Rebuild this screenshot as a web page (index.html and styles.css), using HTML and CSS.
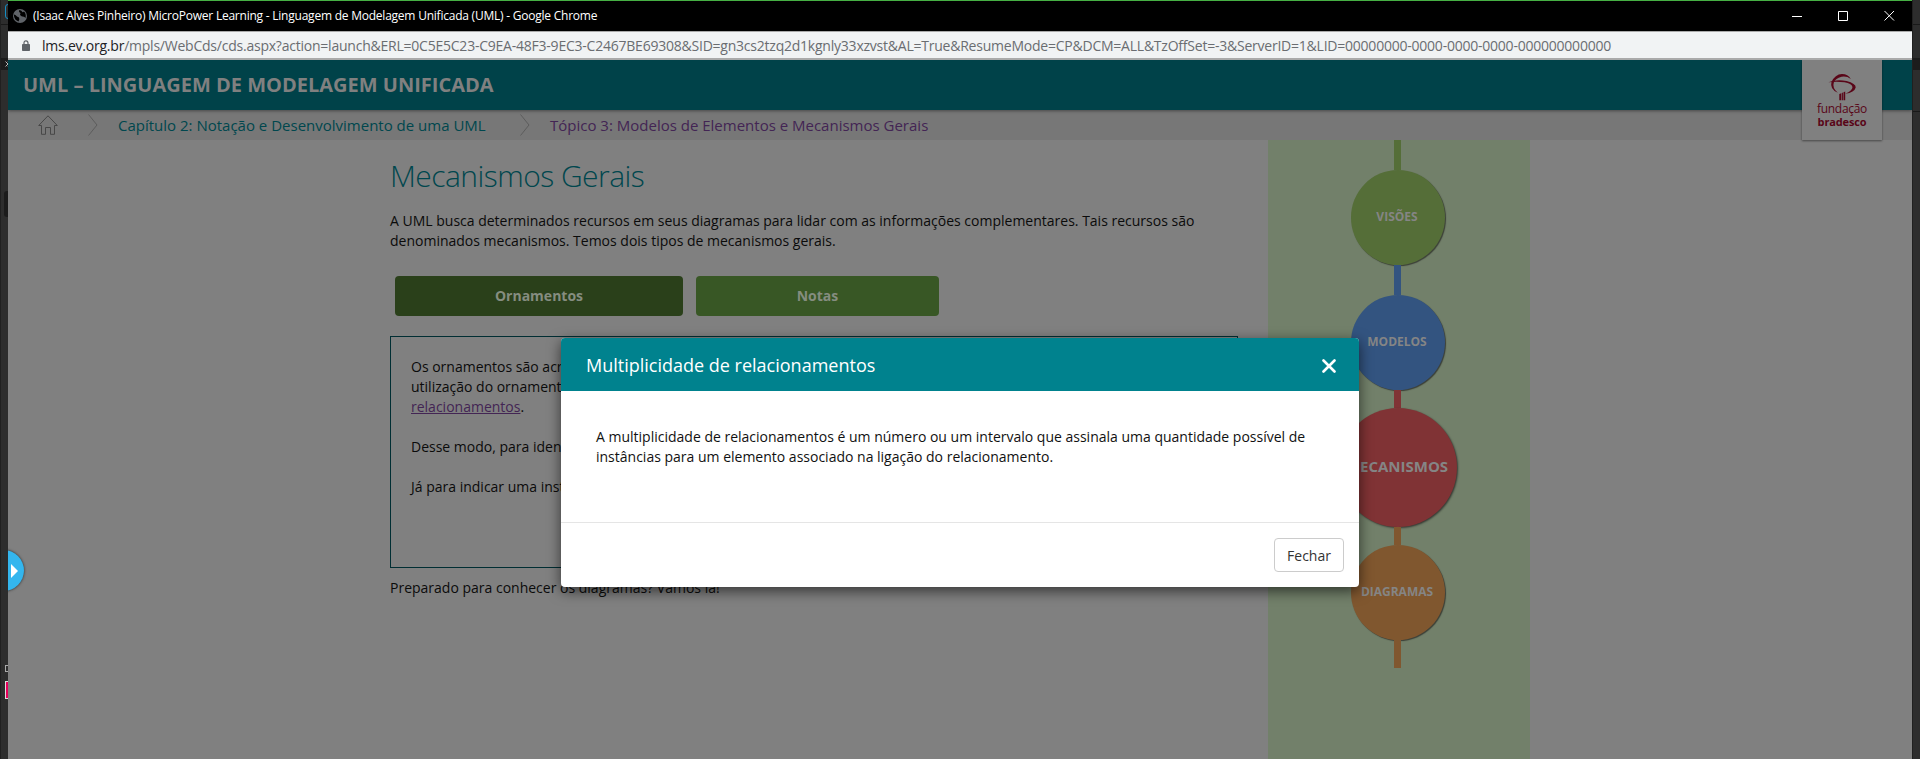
FILE: index.html
```html
<!DOCTYPE html>
<html lang="pt-BR">
<head>
<meta charset="utf-8">
<title>MicroPower Learning - UML</title>
<link rel="stylesheet" href="styles.css">
</head>
<body>
<div class="desktop">
  <div class="edge edge-left">
    <i class="tab"></i><i class="line l1"></i><i class="band"></i><svg class="chev" viewBox="0 0 4 6"><path d="M.5 .5L3 3L.5 5.500M3 .5L5.500 3L3 5.500" fill="none" stroke="#bbb"/></svg><i class="slot"></i><i class="mini"></i><i class="swatch"></i>
  </div>
  <div class="window">
    <header class="titlebar">
      <svg class="globe" viewBox="0 0 14 14"><circle cx="7" cy="7" r="7" fill="#5f6368"/><path d="M1 5.500Q3 6 4 7.500L6 8.500Q7 10 5.500 12.500Q1.500 11 1 7ZM6 1.300Q5.500 3.500 7.500 4L7 6L9 7.500Q11.500 7 12.500 9Q13.500 5 11 2.500Q9.500 4 9 2.500Q8 1 6 1.300Z" fill="#000"/></svg>
      <span class="title">(Isaac Alves Pinheiro) MicroPower Learning - Linguagem de Modelagem Unificada (UML) - Google Chrome</span>
      <svg class="controls" viewBox="0 0 104 12"><path d="M0 6.500H10M46.500 1.500H55.500V10.500H46.500ZM92.500 1L102 10.500M102 1L92.500 10.500" fill="none" stroke="#fff"/></svg>
    </header>
    <div class="urlbar">
      <svg class="lock" viewBox="0 0 8 11"><path d="M2 5V3Q2 .8 4 .8T6 3V5" fill="none" stroke="#5f6368" stroke-width="1.200"/><rect y="4" width="8" height="7" rx=".8" fill="#5f6368"/></svg>
      <span class="url"><b>lms.ev.org.br</b>/mpls/WebCds/cds.aspx?action=launch&amp;ERL=0C5E5C23-C9EA-48F3-9EC3-C2467BE69308&amp;SID=gn3cs2tzq2d1kgnly33xzvst&amp;AL=True&amp;ResumeMode=CP&amp;DCM=ALL&amp;TzOffSet=-3&amp;ServerID=1&amp;LID=00000000-0000-0000-0000-000000000000</span>
    </div>
    <div class="page">
      <div class="course"><span class="course-name">UML – LINGUAGEM DE MODELAGEM UNIFICADA</span></div>
      <nav class="crumbs">
        <svg class="home" viewBox="0 0 20 20"><path d="M.7 10.500L10 .8L19.300 10.500H16.500V19.300H12.500V12.500H7.500V19.300H3.500V10.500Z" fill="none" stroke="#484848"/></svg>
        <svg class="sep" viewBox="0 0 10 22"><path d="M.5 .5L9 11L.5 21.500" fill="none" stroke="#555" stroke-width=".8"/></svg>
        <span class="crumb chapter">Capítulo 2: Notação e Desenvolvimento de uma UML</span>
        <svg class="sep sep2" viewBox="0 0 10 22"><path d="M.5 .5L9 11L.5 21.500" fill="none" stroke="#555" stroke-width=".8"/></svg>
        <span class="crumb topic">Tópico 3: Modelos de Elementos e Mecanismos Gerais</span>
      </nav>
      <div class="brand">
        <svg class="tree" viewBox="0 0 28 28"><g fill="#590618"><path d="M3.500 8Q7 .3 14 0Q20 0 22.800 5Q18.500 1.800 13.500 2.800Q7.500 4.500 5.800 8.500Q4 14 9.800 18.800Q1.500 15 3.500 8Z"/><path d="M.3 8.300Q9 4.800 18.500 7Q28 9.500 27.700 13.500Q26.500 18.500 17.200 19.800Q24.500 16.500 24.500 13Q23.500 9.500 16.500 8.300Q8.500 7.300 .3 8.300Z"/><path d="M11.300 20L13.300 19.300V26.300H11.300ZM13.900 19L14.900 18.600V26.300H13.900ZM15.500 18.300L17.200 17.600V26.300H15.500Z"/></g></svg>
        <span class="brand-a">fundação</span><span class="brand-b">bradesco</span>
      </div>
      <div class="columns">
        <main class="lesson">
          <h1>Mecanismos Gerais</h1>
          <p class="intro">A UML busca determinados recursos em seus diagramas para lidar com as informações complementares. Tais recursos são<br>denominados mecanismos. Temos dois tipos de mecanismos gerais.</p>
          <div class="tabs"><span class="pill active">Ornamentos</span><span class="pill notes">Notas</span></div>
          <div class="panel">
            <p>Os ornamentos são acr<br>utilização do ornament<br><a>relacionamentos</a>.</p>
            <p>Desse modo, para iden</p>
            <p>Já para indicar uma inst</p>
          </div>
          <p class="outro">Preparado para conhecer os diagramas? Vamos lá!</p>
        </main>
        <aside class="rail">
          <i class="stem green s1"></i><div class="node green">VISÕES</div>
          <i class="stem blue s2"></i><div class="node blue">MODELOS</div>
          <i class="stem red s3"></i><div class="node red big">MECANISMOS</div>
          <i class="stem orange s4"></i><div class="node orange">DIAGRAMAS</div>
          <i class="stem orange s5"></i>
        </aside>
      </div>
      <div class="drawer"><i></i></div>
      <section class="modal">
        <div class="modal-head"><span>Multiplicidade de relacionamentos</span>
          <svg class="close" viewBox="0 0 14 14"><path d="M1.500 1.500L12.500 12.500M12.500 1.500L1.500 12.500" stroke="#fff" stroke-width="2.600" stroke-linecap="round"/></svg>
        </div>
        <div class="modal-body">A multiplicidade de relacionamentos é um número ou um intervalo que assinala uma quantidade possível de<br>instâncias para um elemento associado na ligação do relacionamento.</div>
        <div class="modal-foot"><button>Fechar</button></div>
      </section>
    </div>
  </div>
  <div class="edge edge-right"><i class="line l1"></i><i class="band"></i><i class="line l2"></i></div>
</div>
</body>
</html>
```

FILE: styles.css
```css
* { box-sizing: border-box; }
body { margin: 0; font-family: "Open Sans", sans-serif; overflow: hidden; }
.desktop { display: grid; grid-template-columns: 8px 1904px 8px; height: 759px; background: #2b2b2b; }
.edge { position: relative; overflow: hidden; background: #2d2d2d; border-left: 1px solid #202020; }
.edge i, .edge svg { position: absolute; }
.line { left: 0; width: 8px; height: 1px; background: #191919; }
.l1 { top: 24px; }
.l2 { top: 111px; }
.band { top: 58px; left: 0; width: 8px; height: 12px; background: #1c1c1c; }
.tab { left: 4px; top: 4px; width: 8px; height: 15px; border: 1px solid #168dc2; border-radius: 3px; }
.chev { left: 4px; top: 61px; width: 4px; height: 6px; }
.slot { left: 3px; top: 191px; width: 8px; height: 26px; background: #1b1b1b; border-radius: 3px; }
.mini { left: 4px; top: 665px; width: 7px; height: 7px; border: 1px solid #aaa; }
.swatch { left: 4px; top: 681px; width: 12px; height: 18px; background: #e6005c; border: 1px solid #ddd; }
.window { display: flex; flex-direction: column; min-width: 0; }
.titlebar { height: 32px; background: #000; border-top: 1px solid #46b044; border-bottom: 1px solid #aaa; display: flex; align-items: center; color: #fff; padding: 0 8px 1px 5px; }
.globe { width: 14px; height: 14px; }
.title { font-size: 12px; margin-left: 6px; white-space: nowrap; letter-spacing: -.23px; }
.controls { width: 104px; height: 12px; margin-left: auto; margin-right: 8px; }
.urlbar { height: 28px; background: #f1f3f4; border-bottom: 2px solid #aaa; display: flex; align-items: center; padding-left: 14px; color: #6a6d71; font-size: 14px; }
.lock { width: 8px; height: 11px; }
.url { margin-left: 12px; white-space: nowrap; letter-spacing: -.228px; }
.url b { font-weight: 400; color: #202124; }
.page { position: relative; flex: 1; background: #808080; overflow: hidden; }
.course { height: 50px; background: #004249; display: flex; align-items: center; padding: 0 0 1px 15px; position: relative; box-shadow: 0 1px 3px rgba(0,0,0,.4); }
.course-name { font-weight: 700; font-size: 20px; color: #808080; white-space: nowrap; }
.crumbs { height: 30px; background: #777; display: flex; align-items: center; padding-left: 30px; font-size: 15px; }
.home { width: 20px; height: 20px; }
.sep { width: 10px; height: 22px; margin-left: 30px; }
.crumb { margin-left: 20px; white-space: nowrap; }
.chapter { color: #00474e; width: 370px; }
.sep2 { margin-left: 32px; }
.topic { color: #432554; }
.brand { position: absolute; right: 30px; top: 0; width: 80px; height: 80px; background: #808080; display: flex; flex-direction: column; align-items: center; color: #590618; font-size: 12px; line-height: 12px; box-shadow: 0 1px 2px rgba(0,0,0,.45); padding-top: 14px; }
.tree { width: 28px; height: 28px; }
.brand-a { margin-top: 1px; letter-spacing: -.3px; }
.brand-b { font-size: 11px; font-weight: 700; letter-spacing: -.15px; margin-top: 1px; }
.columns { display: grid; grid-template-columns: 878px 262px; padding-left: 382px; height: 619px; }
.lesson { font-size: 14px; line-height: 20px; color: #0b0b0b; }
.lesson p { margin: 0; white-space: nowrap; }
h1 { margin: 16px 0 0; font-size: 30px; line-height: 40px; font-weight: 300; letter-spacing: -.54px; color: #00474e; }
.intro { padding-top: 15px; }
.tabs { display: flex; gap: 13px; margin: 25px 0 20px 5px; }
.pill { height: 40px; border-radius: 4px; width: 288px; display: flex; align-items: center; justify-content: center; font-weight: 700; color: #858d80; background: #2a401a; }
.tabs .notes { width: 243px; background: #385725; }
.panel { width: 848px; height: 232px; border: 1px solid #002e33; padding: 20px; }
.lesson .panel p { margin-bottom: 20px; }
.panel a { color: #432554; text-decoration: underline; }
.lesson .outro { margin-top: 10px; }
.rail { background: #72806a; display: flex; flex-direction: column; align-items: center; padding-right: 3px; }
.node { flex: none; width: 94px; height: 95px; border-radius: 50%; color: #858585; font-weight: 700; font-size: 12px; display: flex; align-items: center; justify-content: center; padding: 0 1px 2px 0; box-shadow: 1px 1px 1px #3b3f37; }
.big { width: 118px; height: 119px; font-size: 15px; padding-bottom: 4px; box-shadow: 1px 1px 2px #343832; }
.stem { width: 7px; flex: none; }
.green { background: #556e38; }
.blue { background: #335480; }
.red { background: #803335; }
.orange { background: #80572f; }
.s1 { height: 30px; }
.s2 { height: 30px; }
.s3 { height: 18px; }
.s4 { height: 18px; }
.s5 { height: 28px; }
.drawer { position: absolute; left: -25px; top: 490px; width: 41px; height: 41px; border-radius: 50%; background: #34b6ee; box-shadow: 0 0 3px rgba(0,0,0,.7); }
.drawer i { position: absolute; left: 28px; top: 14px; border: 7px solid transparent; border-left-color: #fff; border-right: 0; }
.modal { position: absolute; left: 553px; top: 278px; width: 798px; height: 249px; background: #fff; border-radius: 4px; overflow: hidden; box-shadow: 0 4px 14px rgba(0,0,0,.6); display: flex; flex-direction: column; }
.modal-head { height: 53px; background: #00828e; color: #fff; display: flex; align-items: center; justify-content: space-between; padding: 0 23px 0 25px; font-size: 18px; }
.close { width: 14px; height: 14px; margin-top: 3px; }
.modal-body { flex: 1; padding: 36px 35px 0; font-size: 14px; line-height: 20px; color: #111; white-space: nowrap; }
.modal-foot { height: 65px; border-top: 1px solid #e5e5e5; padding: 15px; display: flex; justify-content: flex-end; }
.modal-foot button { width: 70px; height: 34px; border: 1px solid #ccc; border-radius: 4px; background: #fff; font: 14px "Open Sans", sans-serif; color: #333; padding: 0; }
```
